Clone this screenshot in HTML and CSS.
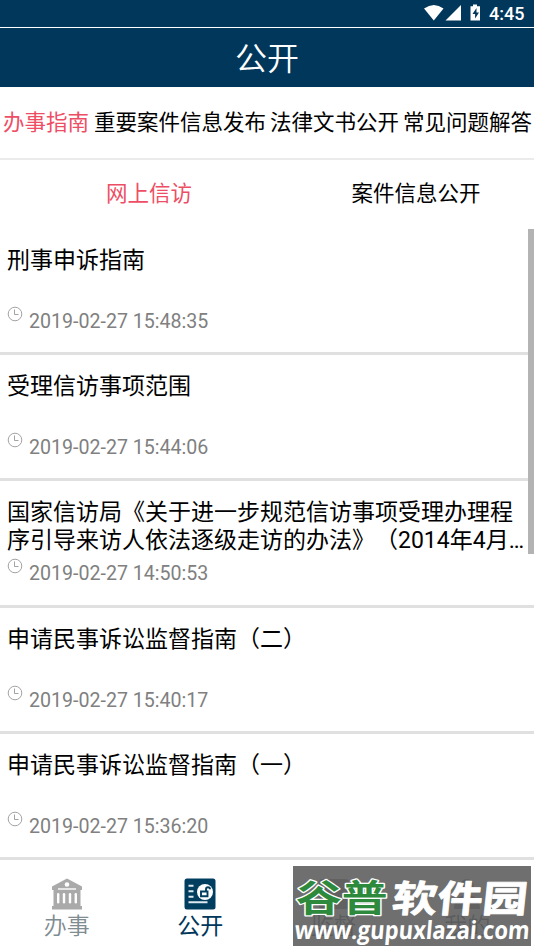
FILE: index.html
```html
<!DOCTYPE html>
<html lang="zh-CN">
<head>
<meta charset="utf-8">
<title>公开</title>
<link rel="stylesheet" href="styles.css">
</head>
<body>
<div class="app">
  <div class="status">
    <svg class="status-icons" width="60" height="18" viewBox="0 0 60 18" fill="#fff">
      <path d="M0 4.600Q10-2.400 19.500 4.600L9.800 16.500z"/>
      <path d="M37 1v15.500H21.500z"/>
      <path fill-rule="evenodd" d="M46.500 2.200H49V.5h4v1.700h3v14.300h-9.500zM52.500 4l-4 6h2.600v4.500l3.900-6h-2.500z"/>
    </svg>
    <span class="clock">4:45</span>
  </div>
  <header class="header">公开</header>
  <nav class="tabs">
    <span class="active">办事指南</span><span>重要案件信息发布</span><span>法律文书公开</span><span>常见问题解答</span>
  </nav>
  <nav class="subtabs"><span class="active">网上信访</span><span>案件信息公开</span></nav>
  <main class="list">
    <article class="row"><h2>刑事申诉指南</h2><div class="meta"><svg class="time-icon" viewBox="0 0 16 16"><circle cx="8" cy="8" r="6.800"/><path d="M7.500 3.500v5h4"/></svg><time>2019-02-27 15:48:35</time></div></article>
    <article class="row"><h2>受理信访事项范围</h2><div class="meta"><svg class="time-icon" viewBox="0 0 16 16"><circle cx="8" cy="8" r="6.800"/><path d="M7.500 3.500v5h4"/></svg><time>2019-02-27 15:44:06</time></div></article>
    <article class="row"><h2>国家信访局《关于进一步规范信访事项受理办理程<br>序引导来访人依法逐级走访的办法》（2014年4月…</h2><div class="meta"><svg class="time-icon" viewBox="0 0 16 16"><circle cx="8" cy="8" r="6.800"/><path d="M7.500 3.500v5h4"/></svg><time>2019-02-27 14:50:53</time></div></article>
    <article class="row"><h2>申请民事诉讼监督指南（二）</h2><div class="meta"><svg class="time-icon" viewBox="0 0 16 16"><circle cx="8" cy="8" r="6.800"/><path d="M7.500 3.500v5h4"/></svg><time>2019-02-27 15:40:17</time></div></article>
    <article class="row"><h2>申请民事诉讼监督指南（一）</h2><div class="meta"><svg class="time-icon" viewBox="0 0 16 16"><circle cx="8" cy="8" r="6.800"/><path d="M7.500 3.500v5h4"/></svg><time>2019-02-27 15:36:20</time></div></article>
    <div class="scrollbar"></div>
  </main>
  <footer class="bottom">
    <div class="item">
      <svg width="32" height="32" viewBox="0 0 32 32"><path fill="#aaa" d="M16 .5 31 8.500V12H1V8.500zM2.500 12h27v16h-27zM1 28h30v3.500H1z"/><g fill="#fff"><circle cx="16" cy="6.500" r="2.300"/><path d="M7 10.300h18v1.400H7z"/><rect x="6" y="15" width="2.400" height="10.500" rx="1.200"/><rect x="11.800" y="15" width="2.400" height="10.500" rx="1.200"/><rect x="17.800" y="15" width="2.400" height="10.500" rx="1.200"/><rect x="23.600" y="15" width="2.400" height="10.500" rx="1.200"/></g></svg>
      <span>办事</span>
    </div>
    <div class="item selected">
      <svg width="32" height="32" viewBox="0 0 32 32"><rect x=".5" y=".5" width="31" height="31" rx="2.500" fill="#003e60"/><path d="M4.500 7.800h5M4.500 13.300h5M4.500 18.800h5M4.500 24.200h19" fill="none" stroke="#dceaf0" stroke-width="1.900"/><circle cx="21" cy="14" r="8" fill="#fff"/><path d="M17 13.500h6.500v4.700H17zM22 13v-1.700q0-2 2-2t2 2" fill="none" stroke="#003e60" stroke-width="1.900"/></svg>
      <span>公开</span>
    </div>
    <div class="item"><svg width="32" height="32" viewBox="0 0 32 32"><rect x="1" y="1" width="30" height="30" rx="3" fill="#aaa"/></svg><span>监督</span></div>
    <div class="item"><svg width="32" height="32" viewBox="0 0 32 32" fill="#aaa"><circle cx="16" cy="8" r="7"/><path d="M3 31q0-14 13-14t13 14z"/></svg><span>我的</span></div>
    <div class="watermark">
      <svg width="238" height="80" viewBox="0 0 238 80">
        <g class="brand">
          <text class="green" transform="translate(3 46) scale(1.240 1)">谷普</text>
          <text class="white" transform="translate(98 46) skewX(-6) scale(1.220 1)">软件园</text>
        </g>
        <text class="site" transform="translate(1 73) skewX(-5)" textLength="235" lengthAdjust="spacingAndGlyphs">www.gupuxlazai.com</text>
      </svg>
    </div>
  </footer>
</div>
</body>
</html>
```

FILE: styles.css
```css
* { box-sizing: border-box; }
body { margin: 0; background: #fff; color: #000; font-family: Roboto, "Noto Sans CJK SC", sans-serif; text-spacing-trim: space-all; }
.app { width: 534px; height: 950px; overflow: hidden; display: flex; flex-direction: column; }
.status { flex: none; height: 28px; background: #00375b; border-bottom: 1px solid #fff; display: flex; justify-content: flex-end; padding: 4px 9px 0 0; color: #fff; }
.status-icons { margin-right: 5px; }
.clock { font-size: 18px; line-height: 20px; font-weight: 500; width: 36px; }
.header { flex: none; height: 59px; background: #00375b; color: #fff; font-size: 32px; line-height: 62px; text-align: center; font-weight: 350; }
.tabs { flex: none; height: 73px; border-bottom: 2px solid #ebebeb; display: flex; gap: 5px; padding: 0 0 0 3px; font-size: 21.500px; line-height: 72px; white-space: nowrap; }
.tabs span + span + span { margin-left: -1px; }
.active { color: #ee4e65; }
.subtabs { flex: none; height: 69px; display: flex; font-size: 21.500px; line-height: 68px; }
.subtabs span { flex: none; width: 298px; text-align: center; }
.subtabs span + span { width: 236px; }
.list { flex: none; height: 631px; position: relative; }
.row { height: 126.200px; border-bottom: 3px solid #e0e0e0; padding: 18px 7px 0; }
.row h2 { margin: 0; height: 55px; font-size: 23px; line-height: 27.600px; font-weight: 400; white-space: nowrap; }
.meta { display: flex; gap: 6px; color: #808080; font-size: 19.600px; line-height: 24px; }
.meta time { padding-top: 8px; }
.time-icon { width: 16px; height: 16px; margin-top: 4px; fill: none; stroke: #999; stroke-width: .9; }
.scrollbar { position: absolute; right: 0; top: 0; width: 6px; height: 325px; background: #b3b3b3; }
.bottom { flex: none; height: 90px; display: flex; position: relative; }
.item { flex: 1; display: flex; flex-direction: column; align-items: center; padding-top: 18px; font-size: 23px; line-height: 34px; color: #7f8c91; font-weight: 350; }
.item svg { flex: none; }
.selected { color: #00375b; font-weight: 400; }
.watermark { position: absolute; left: 293px; top: 6px; width: 238px; height: 80px; background: rgba(84, 84, 84, .84); }
.watermark svg { display: block; }
.brand { font: 700 37px "Noto Sans CJK SC", sans-serif; paint-order: stroke; stroke-linejoin: round; }
.green { fill: #2d8a3c; stroke: #fff; stroke-width: 2.500px; }
.white { fill: #fff; stroke: #fff; stroke-width: .8px; }
.site { font: 700 25px "Open Sans", sans-serif; fill: #fff; }
```
